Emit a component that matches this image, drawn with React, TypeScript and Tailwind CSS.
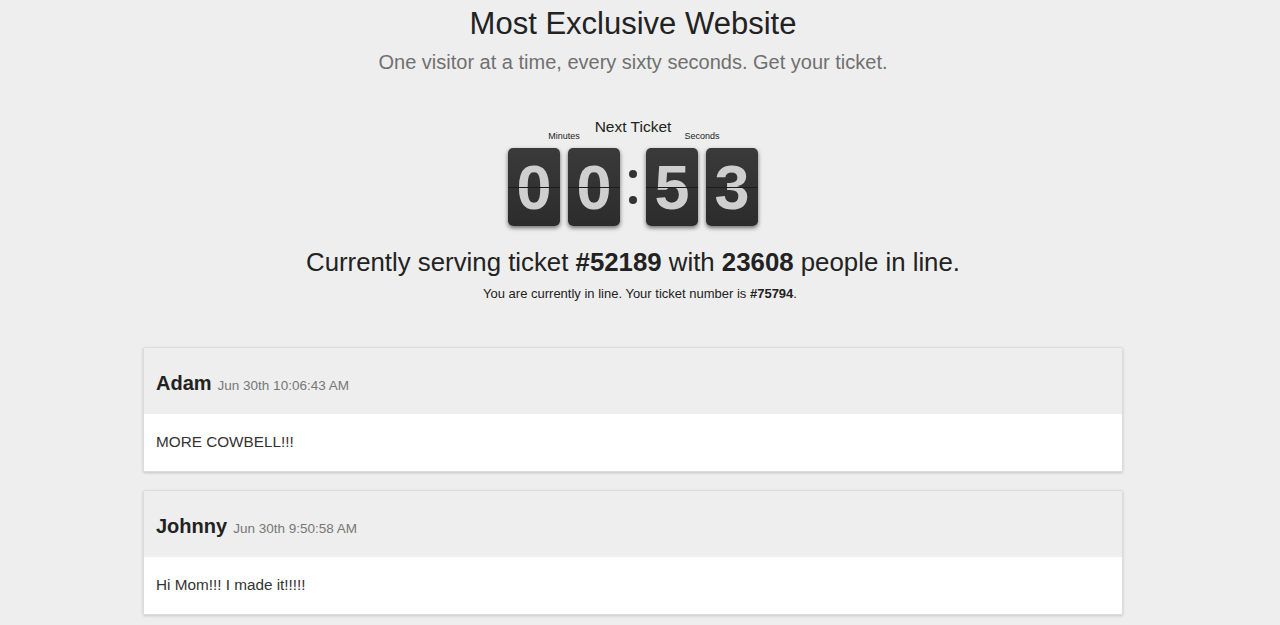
import React from 'react';

type Post = { name: string; time: string; body: string };

const POSTS: Post[] = [
  { name: 'Adam', time: 'Jun 30th 10:06:43 AM', body: 'MORE COWBELL!!!' },
  { name: 'Johnny', time: 'Jun 30th 9:50:58 AM', body: 'Hi Mom!!! I made it!!!!!' },
];

const FlipDigit: React.FC<{ value: string }> = ({ value }) => (
  <div className="relative w-[52px] h-[78px] rounded-[5px] bg-gradient-to-b from-[#3a3a3a] to-[#2c2c2c] shadow-[0_2px_4px_rgba(0,0,0,0.55)] flex items-center justify-center">
    <span className="text-[63px] leading-[78px] font-bold text-[#cfcfcf]">{value}</span>
    {/* flip seam */}
    <div className="absolute left-0 right-0 top-[39px] h-px bg-[#1c1c1c]" />
  </div>
);

const PostCard: React.FC<{ post: Post }> = ({ post }) => (
  <div className="border border-[#dcdcdc] rounded-[2px] shadow-[0_1px_3px_rgba(0,0,0,0.18)] overflow-hidden">
    <div className="bg-[#eeeeee] px-3 pt-[24px] pb-[17px] flex items-baseline gap-[6px] leading-[22px]">
      <span className="text-[20px] font-bold text-[#222]">{post.name}</span>
      <span className="text-[13.5px] text-[#777]">{post.time}</span>
    </div>
    <div className="bg-white px-3 pt-[18px] pb-[19px] text-[15.3px] leading-[20px] text-[#333]">{post.body}</div>
  </div>
);

const App: React.FC = () => {
  return (
    <div className="min-h-screen bg-[#eeeeee] pr-[14px] pt-[6px] pb-10 font-['Liberation_Sans',Arial,sans-serif] text-[#333]">
      {/* Header */}
      <div className="text-center">
        <h1 className="text-[31px] leading-[36px] text-[#222]">Most Exclusive Website</h1>
        <p className="mt-[8px] text-[20px] leading-[24px] text-[#707070]">
          One visitor at a time, every sixty seconds. Get your ticket.
        </p>
      </div>

      {/* Countdown */}
      <div className="mt-[44px] flex flex-col items-center">
        <div className="text-[15.5px] leading-[18px] text-[#222]">Next Ticket</div>
        <div className="-mt-[5px] flex text-[9px] leading-[10px] text-[#222]">
          <div className="w-[112px] text-center">Minutes</div>
          <div className="w-[26px]" />
          <div className="w-[112px] text-center">Seconds</div>
        </div>
        <div className="mt-[7px] flex">
          <div className="flex gap-2">
            <FlipDigit value="0" />
            <FlipDigit value="0" />
          </div>
          <div className="w-[26px] flex flex-col items-center justify-center gap-[18px]">
            <div className="w-[8px] h-[8px] rounded-full bg-[#333]" />
            <div className="w-[8px] h-[8px] rounded-full bg-[#333]" />
          </div>
          <div className="flex gap-2">
            <FlipDigit value="5" />
            <FlipDigit value="3" />
          </div>
        </div>
      </div>

      {/* Queue status */}
      <div className="mt-[21px] text-center">
        <p className="text-[25.8px] leading-[30px] text-[#222]">
          Currently serving ticket <b>#52189</b> with <b>23608</b> people in line.
        </p>
        <p className="mt-[8px] pl-[14px] text-[13px] leading-[17px] text-[#222]">
          You are currently in line. Your ticket number is <b>#75794</b>.
        </p>
      </div>

      {/* Messages */}
      <div className="mt-[45px] w-[980px] mx-auto flex flex-col gap-[18px]">
        {POSTS.map((p) => (
          <PostCard key={p.name} post={p} />
        ))}
      </div>
    </div>
  );
};

export default App;
